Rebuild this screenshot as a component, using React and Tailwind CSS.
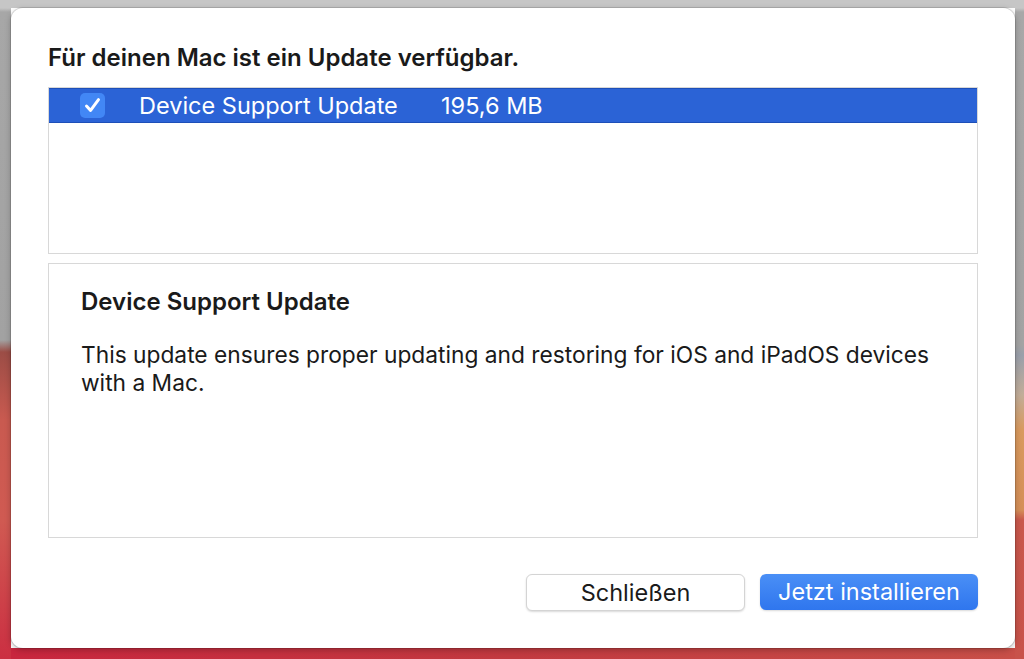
import React from 'react';

const font = { fontFamily: 'Inter, "Liberation Sans", sans-serif' };

const CheckBox = () => (
  <div className="w-[25px] h-[25px] rounded-[5px] bg-[#4287f5] flex items-center justify-center">
    <svg width="19" height="19" viewBox="0 0 19 19" fill="none">
      <path d="M3.5 10 L7.6 14.4 L15.5 3.6" stroke="white" strokeWidth="3" strokeLinecap="round" strokeLinejoin="round" />
    </svg>
  </div>
);

const App = () => {
  return (
    <div className="w-[1024px] h-[659px] flex overflow-hidden" style={font}>
      {/* left edge of the desktop */}
      <div className="w-[11px] h-full bg-[linear-gradient(to_bottom,#c6c6c6_0px,#c6c6c6_8px,#a7a7a7_12px,#a2a2a2_340px,#9c4d46_352px,#c95a50_420px,#d05a52_520px,#cb2f42_659px)]"></div>

      <div className="flex-1 flex flex-col">
        <div className="h-2 bg-[#c6c6c6]"></div>

        {/* Dialog */}
        <div className="h-[640px] bg-white rounded-[12px] shadow-[0_0_0_1px_rgba(0,0,0,0.12),0_2px_6px_rgba(0,0,0,0.25)] px-[37px] pt-[38px] flex flex-col relative z-10">
          <h1 className="text-[24px] font-semibold text-[#1a1a1a] leading-[24px]">
            Für deinen Mac ist ein Update verfügbar.
          </h1>

          {/* update list */}
          <div className="mt-[17px] h-[167px] border border-[#d8d8d8]">
            <div className="h-[35px] bg-[#2b63d6] border-y border-[#1d4fb8] flex items-center pl-[31px] text-white text-[23.5px]">
              <CheckBox />
              <span className="ml-[34px] w-[302px]">Device Support Update</span>
              <span>195,6 MB</span>
            </div>
          </div>

          {/* description */}
          <div className="mt-[9px] h-[275px] border border-[#d8d8d8] pl-[32px] pr-[20px] pt-[24px] text-[#1a1a1a]">
            <h2 className="text-[24px] font-semibold leading-[28px]">Device Support Update</h2>
            <p className="mt-[25px] text-[22.75px] leading-[28px]">
              This update ensures proper updating and restoring for iOS and iPadOS devices with a Mac.
            </p>
          </div>

          {/* buttons */}
          <div className="mt-[36px] flex justify-end gap-[15px]">
            <button className="w-[219px] h-[37px] rounded-[6px] bg-white border border-[#d4d4d4] shadow-[0_1px_2px_rgba(0,0,0,0.15)] text-[23.5px] leading-none text-[#1a1a1a]">
              Schließen
            </button>
            <button className="w-[218px] h-[36px] rounded-[6px] bg-[linear-gradient(to_bottom,#4a8ff6,#2f76ee)] shadow-[0_1px_2px_rgba(0,0,0,0.15)] text-[23.5px] leading-none text-white">
              Jetzt installieren
            </button>
          </div>
        </div>

        <div className="flex-1 bg-[linear-gradient(to_right,#c8263e,#c23a40,#c84f48)]"></div>
      </div>

      {/* right edge of the desktop */}
      <div className="w-[9px] h-full bg-[linear-gradient(to_bottom,#c6c6c6_0px,#c6c6c6_8px,#a8a8a8_12px,#a3a3a3_345px,#9aa0ab_355px,#c2ad98_395px,#d99a5e_430px,#d58f58_510px,#c9584c_520px,#c8524a_659px)]"></div>
    </div>
  );
};

export default App;
